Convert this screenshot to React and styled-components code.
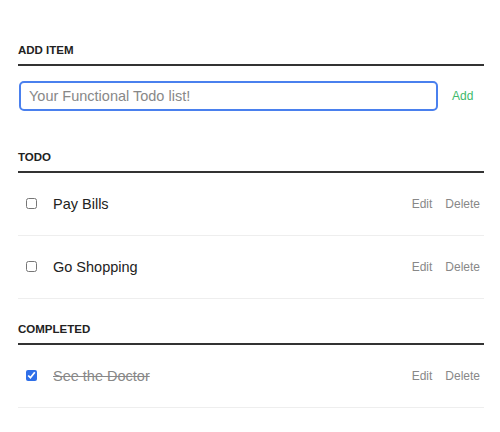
import styled, { createGlobalStyle } from "styled-components";

const GlobalStyle = createGlobalStyle`
  body {
    margin: 0;
    background: #fff;
    font-family: "Liberation Sans", Arial, sans-serif;
    color: #333;
  }
`;

const Container = styled.div`
  width: 466px;
  margin-left: 18px;
  padding-top: 43px;
`;

const SectionTitle = styled.h3`
  margin: 0;
  padding-bottom: 7px;
  font-size: 11.5px;
  font-weight: 700;
  text-transform: uppercase;
  color: #222;
  border-bottom: 2px solid #333;
  line-height: 14px;
`;

const AddRow = styled.div`
  display: flex;
  align-items: center;
  margin: 15px 0 39px;
`;

const Input = styled.input`
  box-sizing: border-box;
  width: 419px;
  height: 30px;
  margin-left: 1px;
  padding: 0 8px;
  border: 2px solid #4a80ee;
  border-radius: 5px;
  font-family: "Liberation Sans", Arial, sans-serif;
  font-size: 14.5px;
  color: #333;
  outline: none;
  &::placeholder {
    color: #888;
  }
`;

const AddButton = styled.button`
  background: none;
  border: none;
  padding: 0;
  margin-left: 14px;
  font-family: inherit;
  font-size: 12px;
  color: #3fb96a;
  cursor: pointer;
`;

const List = styled.ul`
  list-style: none;
  margin: 0 0 23px;
  padding: 0;
`;

const Item = styled.li`
  display: flex;
  align-items: center;
  height: 63px;
  padding-bottom: 1px;
  box-sizing: border-box;
  border-bottom: 1px solid #eee;
`;

const Check = styled.input`
  width: 11px;
  height: 11px;
  margin: 0 16px 0 8px;
  accent-color: #2f6fe8;
`;

const Label = styled.span`
  flex: 1;
  font-size: 14.5px;
  color: ${(p) => (p.done ? "#888" : "#222")};
  text-decoration: ${(p) => (p.done ? "line-through" : "none")};
`;

const Action = styled.button`
  background: none;
  border: none;
  padding: 0;
  margin-right: ${(p) => (p.last ? "4px" : "13px")};
  font-family: inherit;
  font-size: 12px;
  color: #888;
  cursor: pointer;
`;

const todos = [
  { id: 1, text: "Pay Bills", done: false },
  { id: 2, text: "Go Shopping", done: false },
];
const completed = [{ id: 3, text: "See the Doctor", done: true }];

function TodoItem({ text, done }) {
  return (
    <Item>
      <Check type="checkbox" defaultChecked={done} />
      <Label done={done}>{text}</Label>
      <Action>Edit</Action>
      <Action last>Delete</Action>
    </Item>
  );
}

export default function App() {
  return (
    <>
      <GlobalStyle />
      <Container>
        <SectionTitle>Add Item</SectionTitle>
        <AddRow>
          <Input placeholder="Your Functional Todo list!" />
          <AddButton>Add</AddButton>
        </AddRow>

        <SectionTitle>Todo</SectionTitle>
        <List>
          {todos.map((t) => (
            <TodoItem key={t.id} {...t} />
          ))}
        </List>

        <SectionTitle>Completed</SectionTitle>
        <List>
          {completed.map((t) => (
            <TodoItem key={t.id} {...t} />
          ))}
        </List>
      </Container>
    </>
  );
}
